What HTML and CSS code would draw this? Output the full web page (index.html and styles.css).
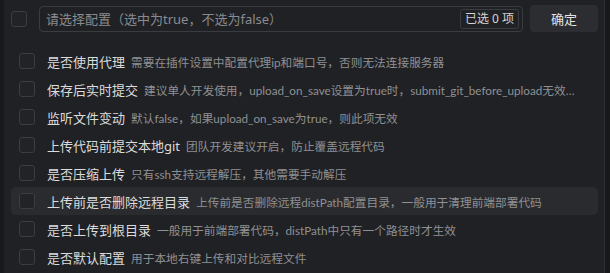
FILE: index.html
```html
<!DOCTYPE html>
<html lang="zh-CN">
<head>
    <meta charset="UTF-8">
    <title>选择配置</title>
    <link rel="stylesheet" href="styles.css">
</head>
<body>
    <div class="editor">
        <div class="quick-pick">
            <div class="header">
                <span class="check"></span>
                <div class="input">
                    <span class="placeholder">请选择配置（选中为true，不选为false）</span>
                    <span class="count">已选 0 项</span>
                </div>
                <button class="ok">确定</button>
            </div>
            <ul class="list">
                <li class="row">
                    <span class="check"></span>
                    <span class="label">是否使用代理</span>
                    <span class="desc">需要在插件设置中配置代理ip和端口号，否则无法连接服务器</span>
                </li>
                <li class="row">
                    <span class="check"></span>
                    <span class="label">保存后实时提交</span>
                    <span class="desc">建议单人开发使用，upload_on_save设置为true时，submit_git_before_upload无效…</span>
                </li>
                <li class="row">
                    <span class="check"></span>
                    <span class="label">监听文件变动</span>
                    <span class="desc">默认false，如果upload_on_save为true，则此项无效</span>
                </li>
                <li class="row">
                    <span class="check"></span>
                    <span class="label">上传代码前提交本地git</span>
                    <span class="desc">团队开发建议开启，防止覆盖远程代码</span>
                </li>
                <li class="row">
                    <span class="check"></span>
                    <span class="label">是否压缩上传</span>
                    <span class="desc">只有ssh支持远程解压，其他需要手动解压</span>
                </li>
                <li class="row hover">
                    <span class="check"></span>
                    <span class="label">上传前是否删除远程目录</span>
                    <span class="desc">上传前是否删除远程distPath配置目录，一般用于清理前端部署代码</span>
                </li>
                <li class="row">
                    <span class="check"></span>
                    <span class="label">是否上传到根目录</span>
                    <span class="desc">一般用于前端部署代码，distPath中只有一个路径时才生效</span>
                </li>
                <li class="row">
                    <span class="check"></span>
                    <span class="label">是否默认配置</span>
                    <span class="desc">用于本地右键上传和对比远程文件</span>
                </li>
            </ul>
        </div>
    </div>
</body>
</html>
```

FILE: styles.css
```css
body {
    margin: 0;
    height: 273px;
    overflow: hidden;
    background: #18191b;
    font-family: "Noto Sans", "Noto Sans CJK SC", sans-serif;
}

.editor {
    display: flex;
    height: 100%;
    padding-left: 4px;
}

/* 弹出选择框 */
.quick-pick {
    width: 601px;
    height: 100%;
    box-sizing: border-box;
    background: #202124;
    border-right: 1px solid #303134;
    padding: 5px 6px 0 7px;
}

.header {
    display: flex;
    align-items: center;
    gap: 7px;
    height: 27px;
}

.header .check {
    margin-right: 5px;
}

.check {
    width: 14px;
    height: 14px;
    flex: none;
    border: 1px solid #3b3d41;
    border-radius: 3px;
    background: #222326;
}

.input {
    flex: 1;
    height: 26px;
    box-sizing: border-box;
    border: 1px solid #3a3c40;
    border-radius: 4px;
    display: flex;
    align-items: center;
    justify-content: space-between;
    padding: 0 3px 0 6px;
}

.placeholder {
    font-size: 13px;
    color: #8a8b8e;
}

.count {
    font-size: 12px;
    color: #d4d4d4;
    border: 1px solid #3a3c40;
    border-radius: 3px;
    padding: 0 4px;
    line-height: 18px;
}

.ok {
    width: 68px;
    height: 27px;
    border: none;
    border-radius: 4px;
    background: #2b2d31;
    color: #e4e4e4;
    font-family: inherit;
    font-size: 13px;
}

.list {
    list-style: none;
    margin: 15px 0 0;
    padding: 0;
}

.row {
    display: flex;
    align-items: center;
    height: 28px;
    padding: 0 8px;
    border-radius: 5px;
    white-space: nowrap;
}

.row.hover {
    background: #2a2b2e;
}

.label {
    margin-left: 12px;
    font-size: 13px;
    color: #dcdcdc;
}

.desc {
    margin-left: 6px;
    font-family: Lato, "Noto Sans CJK SC", sans-serif;
    font-size: 11.7px;
    color: #8f9093;
}
```
